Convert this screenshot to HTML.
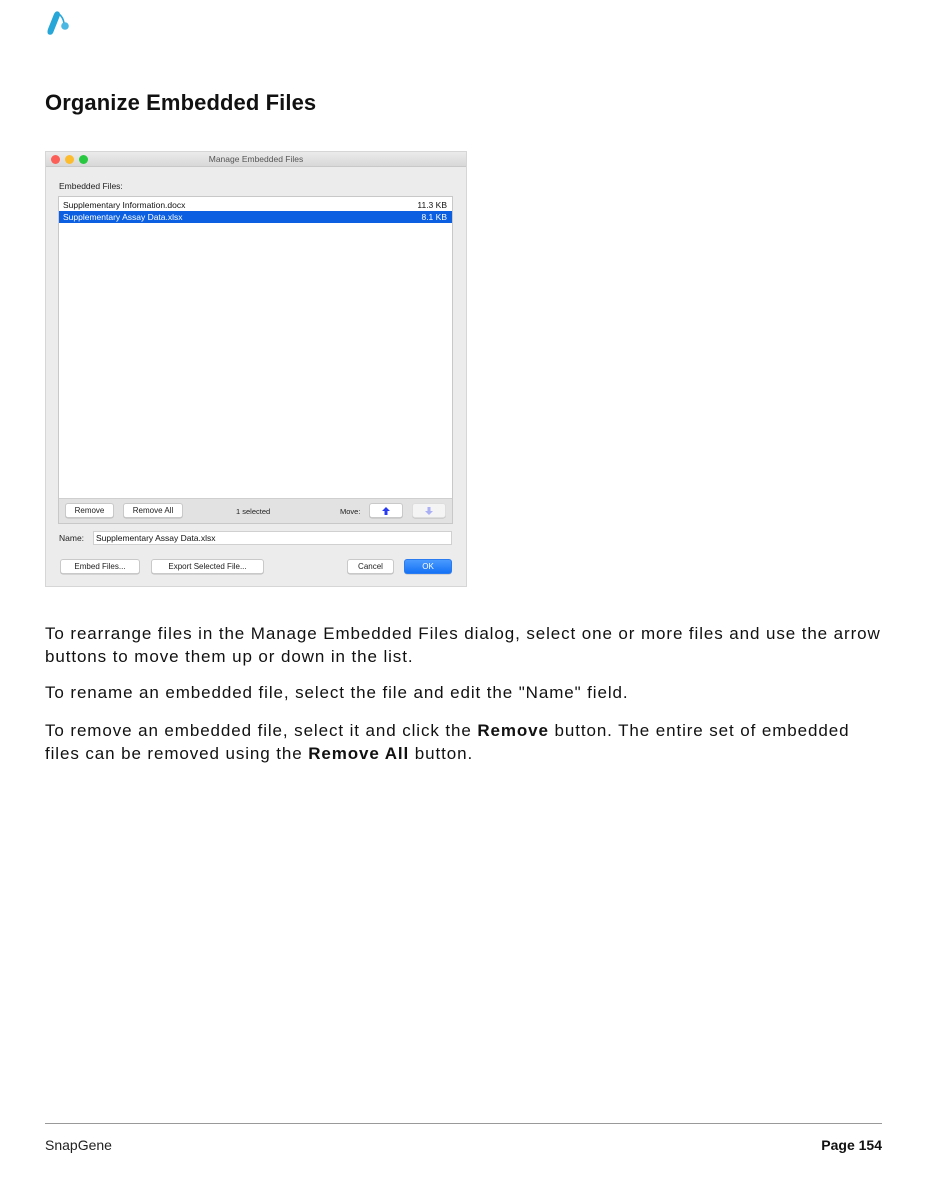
<!DOCTYPE html>
<html><head><meta charset="utf-8"><style>
*{margin:0;padding:0;box-sizing:border-box}
body{width:927px;height:1199px;background:#fff;position:relative;font-family:"Liberation Sans",sans-serif;color:#111;overflow:hidden}
.a{position:absolute}
h1{position:absolute;left:45px;top:90px;font-size:22px;font-weight:bold;letter-spacing:0.1px}
.p{position:absolute;left:45px;font-size:17px;letter-spacing:0.9px;word-spacing:0;line-height:23px;color:#111;white-space:nowrap}
.dlg{position:absolute;left:45px;top:151px;width:422px;height:436px;background:#ececec;border:1px solid #d6d6d6;font-size:8px}
.tb{position:absolute;left:0;top:0;width:420px;height:15px;background:linear-gradient(#ebebeb,#d8d8d8);border-bottom:1px solid #c8c8c8;text-align:center;line-height:15px;color:#555;font-size:8.5px}
.dot{position:absolute;top:3px;width:9px;height:9px;border-radius:50%}
.btn{position:absolute;background:#fff;border:1px solid #c9c9c9;border-radius:3px;text-align:center;font-size:8px;color:#222;line-height:13px;height:15px;box-shadow:0 0.5px 0 #bbb}
</style></head><body>
<svg class="a" style="left:46px;top:8px" width="28" height="28" viewBox="0 0 28 28">
<path d="M2 26 Q1 24 2 21 L8 6 Q10 2 13 4 Q15 6 13 10 L7 25 Q5 28 2 26Z" fill="#27a6d8"/>
<path d="M13 6 Q17 9 18 15" stroke="#27a6d8" stroke-width="1.6" fill="none"/>
<circle cx="19" cy="18" r="3.8" fill="#4ab8e2"/>
</svg>
<h1>Organize Embedded Files</h1>

<div class="dlg">
 <div class="tb">Manage Embedded Files</div>
 <div class="dot" style="left:5px;background:#fc5f57"></div>
 <div class="dot" style="left:19px;background:#fdbc2e"></div>
 <div class="dot" style="left:33px;background:#28c840"></div>
 <div class="a" style="left:13px;top:29px;font-size:8.5px;color:#222">Embedded Files:</div>
 <div class="a" style="left:12px;top:44px;width:395px;height:328px;background:#fff;border:1px solid #c8c8c8">
  <div class="a" style="left:0;top:3px;width:393px;height:10px;font-size:8.5px;line-height:10px;color:#111"><span style="position:absolute;left:4px">Supplementary Information.docx</span><span style="position:absolute;right:5px">11.3 KB</span></div>
  <div class="a" style="left:0;top:14px;width:393px;height:12px;background:#0b5fe0;font-size:8.5px;line-height:12px;color:#fff"><span style="position:absolute;left:4px">Supplementary Assay Data.xlsx</span><span style="position:absolute;right:5px">8.1 KB</span></div>
  <div class="a" style="left:0;top:301px;width:393px;height:25px;background:#e2e2e2;border-top:1px solid #cfcfcf"></div>
 </div>
 <div class="btn" style="left:19px;top:351px;width:49px">Remove</div>
 <div class="btn" style="left:77px;top:351px;width:60px">Remove All</div>
 <div class="a" style="left:190px;top:355px;font-size:7.5px;color:#222">1 selected</div>
 <div class="a" style="left:294px;top:355px;font-size:7.5px;color:#222">Move:</div>
 <div class="btn" style="left:323px;top:351px;width:34px"><svg width="10" height="10" viewBox="0 0 10 10" style="margin-top:2px"><path d="M5 1 L9 5 H6.5 V9 H3.5 V5 H1Z" fill="#2a3cf0"/></svg></div>
 <div class="btn" style="left:366px;top:351px;width:34px;background:#f4f4f4;border-color:#ddd"><svg width="10" height="10" viewBox="0 0 10 10" style="margin-top:2px"><path d="M5 9 L9 5 H6.5 V1 H3.5 V5 H1Z" fill="#a9b0f3"/></svg></div>
 <div class="a" style="left:13px;top:381px;font-size:8.5px;color:#222">Name:</div>
 <div class="a" style="left:47px;top:379px;width:359px;height:14px;background:#fff;border:1px solid #d0d0d0;font-size:8.5px;line-height:12px;padding-left:2px;color:#111">Supplementary Assay Data.xlsx</div>
 <div class="btn" style="left:14px;top:407px;width:80px">Embed Files...</div>
 <div class="btn" style="left:105px;top:407px;width:113px">Export Selected File...</div>
 <div class="btn" style="left:301px;top:407px;width:47px">Cancel</div>
 <div class="btn" style="left:358px;top:407px;width:48px;background:linear-gradient(#4a9bff,#1672f5);border-color:#2a7bf0;color:#fff">OK</div>
</div>

<div class="p" style="top:622px">To rearrange files in the Manage Embedded Files dialog, select one or more files and use the arrow<br>buttons to move them up or down in the list.</div>
<div class="p" style="top:681px">To rename an embedded file, select the file and edit the "Name" field.</div>
<div class="p" style="top:719px">To remove an embedded file, select it and click the <b>Remove</b> button. The entire set of embedded<br>files can be removed using the <b>Remove All</b> button.</div>

<div class="a" style="left:45px;top:1123px;width:837px;height:1px;background:#999"></div>
<div class="a" style="left:45px;top:1137px;font-size:14px;color:#222">SnapGene</div>
<div class="a" style="right:45px;top:1137px;font-size:14px;font-weight:bold;color:#111">Page 154</div>
</body></html>
